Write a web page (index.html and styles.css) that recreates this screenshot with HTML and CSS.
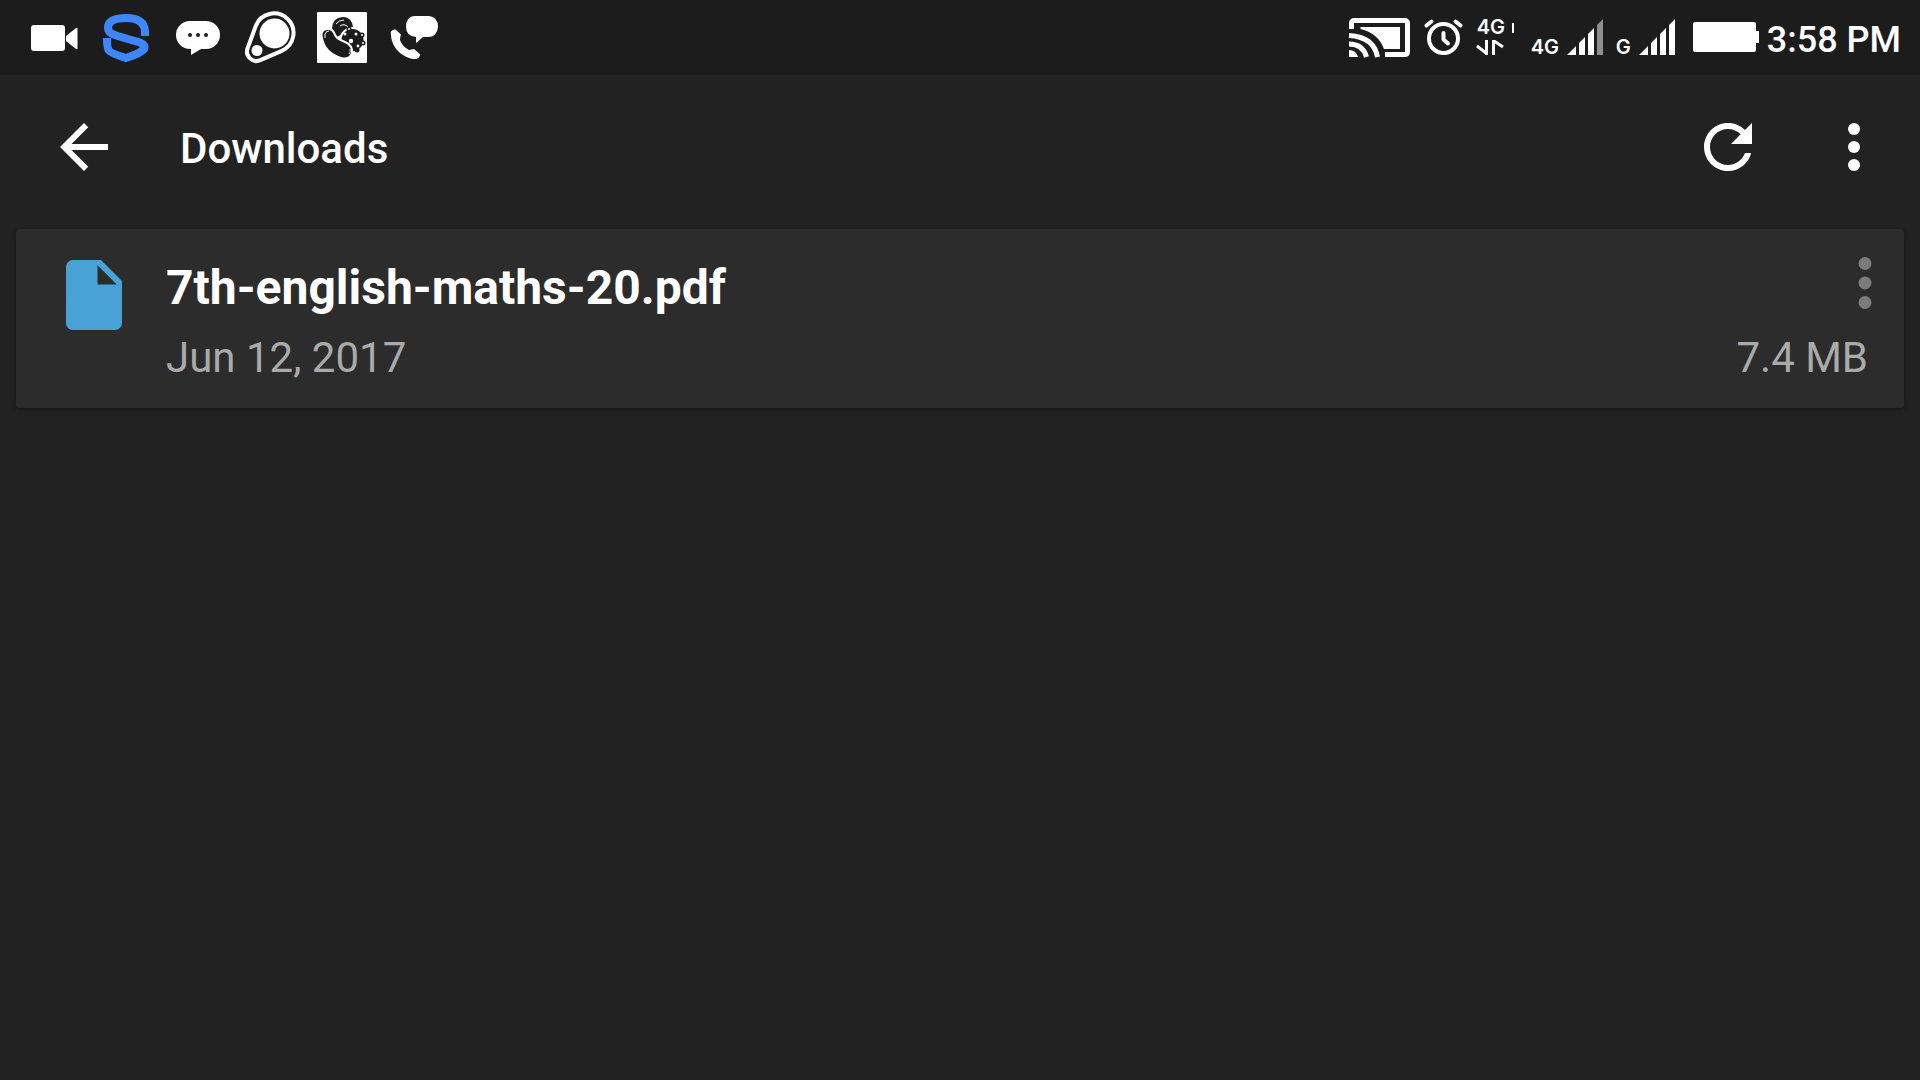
FILE: index.html
```
<!DOCTYPE html>
<html lang="en">
<head>
	<meta charset="utf-8">
	<meta name="viewport" content="width=device-width, initial-scale=1">
	<title>Downloads</title>
	<link rel="stylesheet" href="styles.css">
</head>
<body>
	<!-- status bar -->
	<div class="status-bar">
		<div class="notifications">
			<svg class="notification" viewBox="0 0 72 75">
				<rect x="13" y="25" width="34" height="26" rx="3"/>
				<path d="M48 36L58 28h1.500v21H58L48 41z"/>
			</svg>
			<svg class="notification" viewBox="0 0 72 75">
				<path class="logo-s" d="M55 36V31Q54 18 36 18Q18 18 18 28Q18 33 26 35.500L50 42.500Q56 45 54 49Q51 53 36 58Q20 53 18.500 50Q17 47 17 38"/>
			</svg>
			<svg class="notification" viewBox="0 0 72 75">
				<path d="M28 21H44A14 14 0 0 1 44 49H39L29 55V49H28A14 14 0 0 1 28 21z"/>
				<g class="cutout">
					<circle cx="28" cy="35" r="2"/>
					<circle cx="36" cy="35" r="2"/>
					<circle cx="44" cy="35" r="2"/>
				</g>
			</svg>
			<svg class="notification" viewBox="0 0 72 75">
				<path class="outline" d="M21.700 26.200A19.500 19.500 0 1 1 47.800 50.800L26.300 60.200A9.500 9.500 0 0 1 13.600 48.200z"/>
				<circle cx="40.500" cy="33.500" r="15"/>
				<circle cx="23" cy="50.500" r="5.500"/>
			</svg>
			<svg class="notification" viewBox="0 0 72 75">
				<rect x="11" y="12" width="50" height="51" rx="1"/>
				<g class="cutout">
					<path d="M26 28Q27 17 38 17Q46 18 47 27L38 33L31 37z"/>
					<circle class="edge" cx="46.500" cy="40" r="12"/>
					<circle cx="56" cy="35" r="2.500"/>
					<circle cx="57" cy="43" r="2.500"/>
					<circle cx="51" cy="50" r="2.500"/>
					<circle cx="43" cy="29" r="2.500"/>
					<path class="edge" d="M15.500 36Q15 29.500 21 29Q27 28.500 29 35Q31 39 38 41.500Q47 45 46 53Q44 59 37 58.500Q18 54 15.500 36z"/>
				</g>
				<path class="shine" d="M19 38V34q1-3 4-3M30 24q3-4 8-4M34 26q4-3 8 1M43 54q2-2 1-5"/>
				<circle cx="39" cy="34" r="1.500"/>
				<circle cx="45" cy="41" r="2.200"/>
				<circle cx="50" cy="34" r="1.500"/>
				<circle cx="56" cy="35" r="1"/>
				<circle cx="52" cy="46" r="1.400"/>
				<circle cx="57" cy="43" r="1"/>
				<circle cx="43" cy="29" r="1"/>
			</svg>
			<svg class="notification" viewBox="0 0 72 75">
				<path d="M36 16H51Q60 17 60 27Q59 37 50 37H45L38 43V37Q28 36 28 27Q28 17 36 16z"/>
				<path d="M12.700 32Q14 29 17.500 29.500L23 34.500Q22 37 22 40Q24 46 31 50L36 49L42.300 54.500Q41 59 37 59Q30 59 22 53Q13 46 12.700 32z"/>
			</svg>
		</div>
		<div class="indicators">
			<svg class="cast" viewBox="0 0 62 37">
				<path class="cast-frame" d="M2.500 11V5.500Q2.500 2.500 5.500 2.500H55.500Q58.500 2.500 58.500 5.500V33.500Q58.500 36.500 55.500 36.500H36"/>
				<path d="M11.500 9H51V31H35Q29 15 11.500 11z"/>
				<path d="M0 32Q7 32 9 39H0z"/>
				<path class="cast-frame" d="M0 26Q14 26 17.500 39M0 17.500Q25 19 28.500 39"/>
			</svg>
			<svg class="alarm" viewBox="0 0 39 36">
				<circle class="alarm-line" cx="19.500" cy="19.500" r="14.500"/>
				<path class="alarm-line" d="M19.500 14V20.500L24 24.500M2.500 6.500L7.500 2.500M31.500 2.500L36.500 6.500"/>
			</svg>
			<div class="data">
				<div class="network">4G</div>
				<svg class="data-arrows" viewBox="0 0 27 16">
					<path class="data-line" d="M0 7L9 14M9.500 1V16M16.500 16V1M17 2L26 8"/>
				</svg>
			</div>
			<div class="tick"></div>
			<div class="network sim">4G</div>
			<svg class="signal" viewBox="0 0 36 36">
				<path d="M0 36L9 27V36zM12 24L18 18V36H12zM21 15L27 9V36H21z"/>
				<path class="faded" d="M30 6L36 0V36H30z"/>
			</svg>
			<div class="network sim-2">G</div>
			<svg class="signal" viewBox="0 0 36 36">
				<path d="M0 36L9 27V36zM12 24L18 18V36H12zM21 15L27 9V36H21zM30 6L36 0V36H30z"/>
			</svg>
			<svg class="battery" viewBox="0 0 66 33">
				<path d="M2 0H61Q63 0 63 2V9H66V21H63V28Q63 30 61 30H2Q0 30 0 28V2Q0 0 2 0z"/>
			</svg>
			<time class="clock" datetime="15:58">3:58 PM</time>
		</div>
	</div>

	<!-- toolbar -->
	<header class="toolbar">
		<button class="icon-btn" type="button" aria-label="Back">
			<svg class="icon" viewBox="0 0 24 24"><path d="M20 11H7.830l5.590-5.590L12 4l-8 8 8 8 1.410-1.410L7.830 13H20v-2z"/></svg>
		</button>
		<h1 class="title">Downloads</h1>
		<button class="icon-btn" type="button" aria-label="Refresh">
			<svg class="icon" viewBox="0 0 24 24"><path d="M17.650 6.350C16.200 4.900 14.210 4 12 4c-4.420 0-7.990 3.580-7.990 8s3.570 8 7.990 8c3.730 0 6.840-2.550 7.730-6h-2.080c-.820 2.330-3.040 4-5.650 4-3.310 0-6-2.690-6-6s2.690-6 6-6c1.660 0 3.140.690 4.220 1.780L13 11h7V4l-2.350 2.350z"/></svg>
		</button>
		<button class="icon-btn" type="button" aria-label="More options">
			<svg class="icon" viewBox="0 0 24 24"><circle cx="12" cy="6" r="2"/><circle cx="12" cy="12" r="2"/><circle cx="12" cy="18" r="2"/></svg>
		</button>
	</header>

	<!-- file list -->
	<main class="files">
		<article class="file">
			<svg class="file-icon" viewBox="0 0 24 24"><path d="M6 2c-1.100 0-1.990.900-1.990 2L4 20c0 1.100.890 2 1.990 2H18c1.100 0 2-.900 2-2V8l-6-6H6zm7 7V3.500L18.500 9H13z"/></svg>
			<div class="file-body">
				<div class="file-row">
					<h2 class="file-name">7th-english-maths-20.pdf</h2>
					<button class="file-more" type="button" aria-label="File options">
						<svg class="dots" viewBox="0 0 24 24"><circle cx="12" cy="6" r="2"/><circle cx="12" cy="12" r="2"/><circle cx="12" cy="18" r="2"/></svg>
					</button>
				</div>
				<div class="file-row file-info">
					<span>Jun 12, 2017</span>
					<span>7.4 MB</span>
				</div>
			</div>
		</article>
	</main>
</body>
</html>
```
FILE: styles.css
```
* {
	margin: 0;
	padding: 0;
	box-sizing: border-box;
}

body {
	min-height: 100vh;
	color: #fff;
	background-color: #222;
	font-family: Roboto, "Noto Sans", sans-serif;
}

svg {
	display: block;
	flex: none;
	fill: currentColor;
	overflow: visible;
}

button {
	flex: none;
	border: 0;
	color: inherit;
	background: none;
	cursor: pointer;
}

/* status bar */
.status-bar {
	display: flex;
	justify-content: space-between;
	height: 75px;
	padding: 0 19px 0 18px;
	background-color: #1c1c1c;
}

.notifications {
	display: flex;
}

.notification {
	width: 72px;
	height: 75px;
}

.logo-s {
	fill: none;
	stroke: #3d86fb;
	stroke-width: 8;
}

.cutout {
	fill: #1c1c1c;
}

.outline {
	fill: none;
	stroke: #fff;
	stroke-width: 4;
}

.edge {
	stroke: #fff;
	stroke-width: 2;
}

.shine {
	fill: none;
	stroke: #fff;
	stroke-width: 1;
}

.indicators {
	display: flex;
	align-items: flex-end;
	padding-bottom: 20px;
}

.cast {
	width: 62px;
	height: 37px;
	margin-right: 13px;
}

.cast-frame {
	fill: none;
	stroke: #fff;
	stroke-width: 5;
}

.alarm {
	width: 39px;
	height: 36px;
	margin-right: 14px;
}

.alarm-line {
	fill: none;
	stroke: #fff;
	stroke-width: 4;
	stroke-linecap: round;
	stroke-linejoin: round;
}

.data {
	display: flex;
	flex-direction: column;
	gap: 4px;
	width: 27px;
}

.network {
	font-family: Inter, sans-serif;
	font-size: 20px;
	font-weight: 600;
	line-height: 16px;
}

.data-arrows {
	width: 27px;
	height: 16px;
}

.data-line {
	fill: none;
	stroke: #fff;
	stroke-width: 3;
}

.tick {
	align-self: flex-start;
	width: 2px;
	height: 10px;
	margin: 23px 17px 0 8px;
	background-color: #fff;
}

.sim {
	width: 36px;
}

.sim-2 {
	width: 23px;
	margin-left: 13px;
}

.signal {
	width: 36px;
	height: 36px;
}

.faded {
	fill: #8e8e8e;
}

.battery {
	width: 66px;
	height: 33px;
	margin: 0 8px 0 18px;
}

.clock {
	font-size: 36px;
	font-weight: 500;
	line-height: 30px;
	white-space: nowrap;
}

/* toolbar */
.toolbar {
	display: flex;
	align-items: center;
	height: 144px;
	padding: 0 30px 0 48px;
}

.icon,
.icon-btn {
	width: 72px;
	height: 72px;
}

.icon-btn + .icon-btn {
	margin-left: 54px;
}

.title {
	flex: 1;
	padding: 4px 0 0 60px;
	font-size: 42px;
	font-weight: 500;
	line-height: 50px;
}

/* file list */
.files {
	padding: 10px 16px;
}

.file {
	display: flex;
	align-items: flex-start;
	gap: 30px;
	padding: 24px 0 25px 36px;
	border-radius: 4px;
	background-color: #2c2c2c;
	box-shadow: 0 1px 4px rgba(0, 0, 0, 0.4);
}

.file-icon {
	width: 84px;
	height: 84px;
	color: #48a2d5;
}

.file-body {
	flex: 1;
	min-width: 0;
	padding-top: 7px;
}

.file-row {
	display: flex;
	align-items: flex-start;
	justify-content: space-between;
}

.file-name {
	font-size: 48px;
	font-weight: 700;
	line-height: 56px;
}

.file-more {
	display: flex;
	align-items: center;
	width: 78px;
	height: 46px;
	color: #7b7b7b;
}

.dots {
	width: 78px;
	height: 78px;
}

.file-info {
	padding: 17px 36px 0 0;
	color: #aaa;
	font-size: 42px;
	line-height: 50px;
}
```
